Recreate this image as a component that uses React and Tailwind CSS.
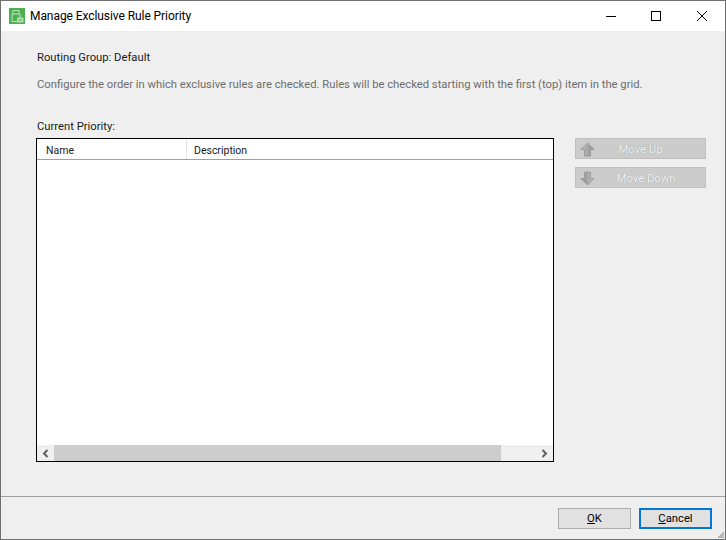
const font = { fontFamily: 'Roboto, sans-serif' };

// block arrow drawn pointing up, flipped for the down button
const BlockArrow = ({ down }) => (
  <svg width="15" height="15" viewBox="0 0 15 15" className={down ? 'rotate-180' : ''}>
    <defs>
      <linearGradient id={down ? 'arrowDown' : 'arrowUp'} x1="0" y1="0" x2="1" y2="0">
        <stop offset="0" stopColor="#c4c4c4" />
        <stop offset="1" stopColor="#8c8c8c" />
      </linearGradient>
    </defs>
    <path d="M7.5 1 14 7.5h-3.5V14h-6V7.5H1z" fill={`url(#${down ? 'arrowDown' : 'arrowUp'})`} stroke="#9a9a9a" strokeWidth="1" />
  </svg>
);

const SideButton = ({ icon, label, className }) => (
  <button className={`relative w-[131px] h-[21px] bg-[#cccccc] border border-[#bfbfbf] pt-[4px] text-[11.25px] text-[#f4f4f4] [text-shadow:0_0_1px_#7f9090] flex items-center justify-center ${className}`}>
    <span className="absolute left-[4px] top-[3px] flex">{icon}</span>
    {label}
  </button>
);

const App = () => {
  return (
    <div className="w-[726px] h-[540px] flex flex-col overflow-hidden bg-[#efefef] border border-[#707070] text-[11.25px] text-[#1a1a1a]" style={font}>
      {/* Title bar */}
      <div className="h-[30px] bg-white flex items-center shrink-0">
        <div className="ml-[8px] w-[16px] h-[16px] bg-[#4caf50] flex items-center justify-center">
          <svg width="14" height="14" viewBox="0 0 14 14" fill="none" stroke="#bfe3bf" strokeWidth="1">
            <path d="M3 5V1.500h6V5M2 5h8v7.500H2z" />
            <path d="M7.500 9h5.500v4H7.500z" fill="#8fce8f" />
          </svg>
        </div>
        <span className="ml-[5px] text-[12px] text-black tracking-[-0.07px]">Manage Exclusive Rule Priority</span>
        <div className="ml-auto flex items-center h-full">
          <svg width="10" height="10" viewBox="0 0 10 10" className="mr-[35px]" shapeRendering="crispEdges">
            <path d="M0 5.500h10" stroke="#000" />
          </svg>
          <svg width="10" height="10" viewBox="0 0 10 10" className="mr-[36px]" shapeRendering="crispEdges">
            <rect x="0.500" y="0.500" width="9" height="9" fill="none" stroke="#000" />
          </svg>
          <svg width="10" height="10" viewBox="0 0 10 10" className="mr-[18px]">
            <path d="M0 0l10 10M10 0 0 10" stroke="#000" />
          </svg>
        </div>
      </div>

      {/* Body */}
      <div className="flex-1 flex flex-col pl-[35px] pr-[19px]">
        <p className="mt-[19px] pl-[1px] leading-[16px]">Routing Group: Default</p>
        <p className="mt-[11px] pl-[1px] leading-[16px] text-[#6d6d6d] whitespace-nowrap">
          Configure the order in which exclusive rules are checked. Rules will be checked starting with the first (top) item in the grid.
        </p>
        <p className="mt-[26px] pl-[1px] leading-[16px]">Current Priority:</p>

        <div className="mt-[3px] flex items-start">
          {/* Grid */}
          <div className="w-[518px] h-[324px] border border-black bg-white flex flex-col">
            <div className="h-[21px] flex border-b border-[#a0a0a0] shrink-0 text-[10.5px]">
              <div className="w-[150px] pl-[9px] pt-[2px] border-r border-[#e3e3e3] leading-[20px]">Name</div>
              <div className="pl-[7px] pt-[2px] leading-[20px]">Description</div>
            </div>
            <div className="flex-1" />
            <div className="h-[16px] bg-[#f0f0f0] flex items-center shrink-0">
              <div className="w-[17px] flex justify-center">
                <svg width="7" height="9" viewBox="0 0 7 9"><path d="M5.500 1 2 4.500 5.500 8" fill="none" stroke="#606060" strokeWidth="2" /></svg>
              </div>
              <div className="w-[447px] h-full bg-[#cdcdcd]" />
              <div className="flex-1 flex justify-end pr-[5px]">
                <svg width="7" height="9" viewBox="0 0 7 9"><path d="M1.500 1 5 4.500 1.500 8" fill="none" stroke="#606060" strokeWidth="2" /></svg>
              </div>
            </div>
          </div>

          {/* Move buttons */}
          <div className="ml-[21px] flex flex-col gap-[8px]">
            <SideButton label="Move Up" className="" icon={<BlockArrow />} />
            <SideButton label="Move Down" className="pl-[11px]" icon={<BlockArrow down />} />
          </div>
        </div>
      </div>

      {/* Footer */}
      <div className="relative h-[43px] border-t border-[#a0a0a0] flex items-start justify-end gap-[8px] pt-[11px] pr-[13px] shrink-0">
        <button className="w-[73px] h-[21px] bg-[#e1e1e1] border border-[#adadad] text-black leading-none"><span className="underline">O</span>K</button>
        <button className="w-[73px] h-[21px] bg-[#e1e1e1] border-2 border-[#0078d7] text-black leading-none"><span className="underline">C</span>ancel</button>
        {/* resize grip */}
        <svg width="6" height="6" viewBox="0 0 6 6" className="absolute right-[1px] bottom-[1px]" shapeRendering="crispEdges">
          <path d="M4 0h2v2H4zM2 2h2v2H2zM4 2h2v2H4zM0 4h2v2H0zM2 4h2v2H2zM4 4h2v2H4z" fill="#b8b8b8" />
        </svg>
      </div>
    </div>
  );
};

export default App;
